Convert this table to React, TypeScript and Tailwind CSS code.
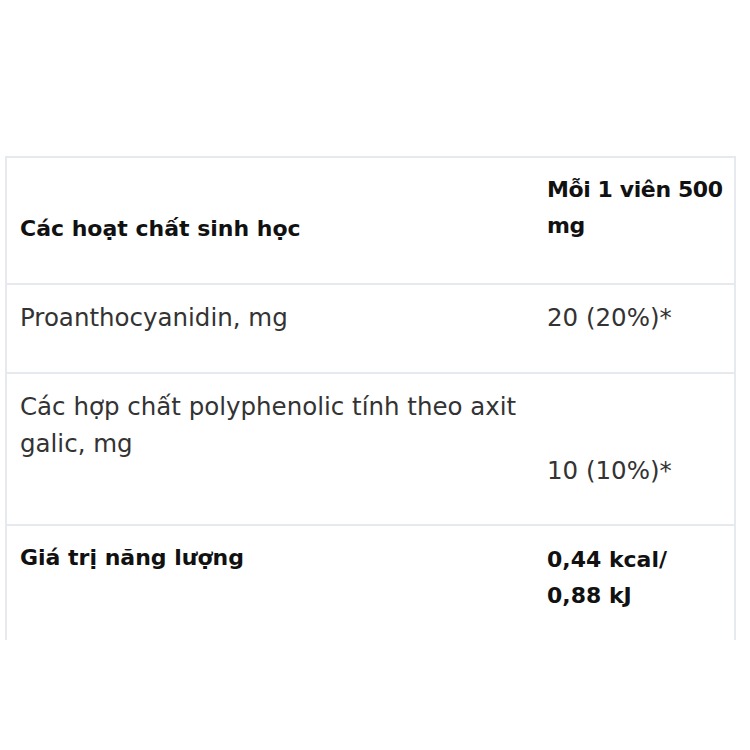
const font = { fontFamily: '"DejaVu Sans", "Noto Sans", sans-serif' }

export default function App() {
  return (
    <div className="min-h-screen bg-white pt-[156px]" style={font}>
      <div className="ml-[5px] w-[731px] h-[484px] overflow-hidden border-x-2 border-t-2 border-[#e6e9ed]">
        {/* header */}
        <div className="grid grid-cols-[528px_1fr] border-b-2 border-[#e6e9ed]">
          <div className="pl-[13px] pt-[53px] pb-[36px] text-[22px] leading-[36px] font-bold text-[#111]">
            Các hoạt chất sinh học
          </div>
          <div className="pl-[12px] pt-[14px] pb-[39px] text-[22px] leading-[36px] font-bold tracking-[-0.4px] text-[#111]">
            Mỗi 1 viên 500
            <br />
            mg
          </div>
        </div>

        {/* row 1 */}
        <div className="grid grid-cols-[528px_1fr] border-b-2 border-[#e6e9ed]">
          <div className="pl-[13px] pt-[14px] pb-[36px] text-[24.5px] leading-[37px] text-[#333]">
            Proanthocyanidin, mg
          </div>
          <div className="pl-[12px] pt-[14px] pb-[36px] text-[24.5px] leading-[37px] text-[#333]">
            20 (20%)*
          </div>
        </div>

        {/* row 2 */}
        <div className="grid grid-cols-[528px_1fr] border-b-2 border-[#e6e9ed]">
          <div className="pl-[13px] pt-[14px] text-[24.5px] leading-[37px] text-[#333]">
            Các hợp chất polyphenolic tính theo axit
            <br />
            galic, mg
          </div>
          <div className="pl-[12px] pt-[78px] pb-[35px] text-[24.5px] leading-[37px] text-[#333]">
            10 (10%)*
          </div>
        </div>

        {/* row 3 */}
        <div className="grid grid-cols-[528px_1fr]">
          <div className="pl-[13px] pt-[14px] text-[22px] leading-[36px] font-bold text-[#111]">
            Giá trị năng lượng
          </div>
          <div className="pl-[12px] pt-[16px] pb-[25px] text-[22px] leading-[36px] font-bold text-[#111]">
            0,44 kcal/
            <br />
            0,88 kJ
          </div>
        </div>
      </div>
    </div>
  )
}
